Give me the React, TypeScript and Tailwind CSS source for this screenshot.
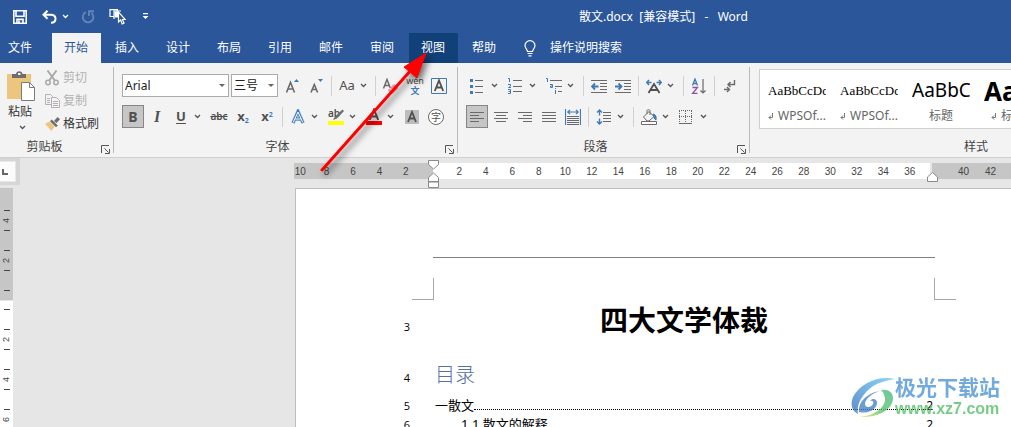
import React from 'react';

const GREY = '#6a6a6a';
const BLUE = '#3f7ab8';

const TABS = ['开始', '插入', '设计', '布局', '引用', '邮件', '审阅', '视图', '帮助'];

const STYLES = [
  { name: 'WPSOf...', sample: 'AaBbCcDd', mark: true, look: "text-[13px] font-['Liberation_Serif',serif]" },
  { name: 'WPSOf...', sample: 'AaBbCcDd', mark: true, look: "text-[13px] font-['Liberation_Serif',serif]" },
  { name: '标题', sample: 'AaBbC', mark: false, look: 'text-[19px]' },
  { name: '标题 1', sample: 'AaBb', mark: true, look: 'text-[26px] font-bold' },
  { name: '标题 2', sample: 'AaBb', mark: true, look: 'text-[19px] font-bold' },
  { name: '标题 3', sample: 'AaBb', mark: true, look: 'text-[19px] font-bold' },
];

const Chevron = ({ color = '#555555' }: { color?: string }) => (
  <svg width="7" height="5" viewBox="0 0 7 5" className="shrink-0" fill="none" stroke={color} strokeWidth="1.3">
    <path d="M1 1l2.5 2.5L6 1" />
  </svg>
);

const Sep = () => <div className="mx-[3px] h-5 w-px shrink-0 bg-[#d0d0d0]" />;

interface IconProps {
  children: React.ReactNode;
  size?: number;
}

const Icon = ({ children, size = 16 }: IconProps) => (
  <svg width={size} height={size} viewBox={`0 0 ${size} ${size}`} className="shrink-0" fill="none" stroke={GREY}>
    {children}
  </svg>
);

interface ToolProps {
  label: string;
  children: React.ReactNode;
  active?: boolean;
}

const Tool = ({ label, children, active }: ToolProps) => (
  <button
    type="button"
    aria-label={label}
    title={label}
    className={`flex h-[23px] shrink-0 items-center justify-center text-[#505050] ${
      active ? 'mr-px w-[22px] border border-[#868686] bg-[#c6c6c6]' : 'w-6 hover:bg-[#dadada]'
    }`}
  >
    {children}
  </button>
);

// Icon button with a menu arrow on its right
const Split = ({ label, children }: ToolProps) => (
  <button
    type="button"
    aria-label={label}
    title={label}
    className="flex h-[23px] w-[38px] shrink-0 items-center gap-[5px] pl-1 text-[#505050] hover:bg-[#dadada]"
  >
    {children}
    <Chevron />
  </button>
);

interface GroupProps {
  label: string;
  children: React.ReactNode;
  className?: string;
  labelClass?: string;
  launcher?: boolean;
}

const Group = ({ label, children, className = '', labelClass = '', launcher = true }: GroupProps) => (
  <section className={`flex flex-col ${className}`} aria-label={label}>
    <div className="min-h-0 flex-1">{children}</div>
    <div className="flex h-5 shrink-0 items-center">
      <span className={`flex-1 text-center text-xs text-[#444444] ${labelClass}`}>{label}</span>
      {launcher && (
        <button type="button" aria-label={`${label}设置`} className="flex w-4 justify-end pt-1 pr-[3px]">
          <svg width="9" height="9" viewBox="0 0 9 9" fill="none" stroke="#555555">
            <path d="M.5 8V.5H8M3.5 3.5l4 4M8.5 4v4.5H4" />
          </svg>
        </button>
      )}
    </div>
  </section>
);

const Divider = () => <div className="my-1 w-px shrink-0 bg-[#b9b9b9]" />;

interface ComboProps {
  label: string;
  options: string[];
  className: string;
}

const Combo = ({ label, options, className }: ComboProps) => (
  <div className={`relative shrink-0 ${className}`}>
    <select
      aria-label={label}
      className="block h-[23px] w-full appearance-none border border-[#ababab] bg-white pl-[2px] text-xs text-[#222222]"
    >
      {options.map((option) => (
        <option key={option}>{option}</option>
      ))}
    </select>
    <svg width="6" height="3" viewBox="0 0 6 3" className="pointer-events-none absolute top-[10px] right-[4px]" fill="#666666">
      <path d="M0 0h6L3 3z" />
    </svg>
  </div>
);

const TitleBar = () => (
  <header className="flex h-[33px] shrink-0 items-center bg-[#2b579a] pl-2 text-white">
    <button type="button" aria-label="保存" className="flex w-6 justify-center">
      <svg width="14" height="14" viewBox="0 0 14 14" fill="none" stroke="white" strokeWidth="1.6">
        <path d="M.8.8h12.4v12.4H.8zM3 1v5.2h8V1M4 13V9.4h6V13M6 10.5V13" />
      </svg>
    </button>
    <button type="button" aria-label="撤消" className="ml-[5px] flex w-6 justify-center">
      <svg width="15" height="14" viewBox="0 0 15 14" fill="none" stroke="white" strokeWidth="2">
        <path d="M5.5.8L1.5 4.8l4 4M2 4.8h6.5c3.3 0 5 1.8 5 4 0 2.5-1.8 4-4.5 4" />
      </svg>
    </button>
    <button type="button" aria-label="撤消列表" className="ml-[1px]">
      <Chevron color="white" />
    </button>
    <button type="button" aria-label="重复" className="ml-[7px] flex w-6 justify-center">
      <svg width="14" height="14" viewBox="0 0 14 14" fill="none" stroke="#6384b6" strokeWidth="1.9">
        <path d="M5 2.2A5.3 5.3 0 1 0 10.5 3M8 6V1.2h5" />
      </svg>
    </button>
    <button type="button" aria-label="选择对象" className="ml-[5px] flex w-6 justify-center">
      <svg width="17" height="17" viewBox="0 0 17 17" fill="none" stroke="white" strokeWidth="1.2">
        <path d="M5 8.5H1V1.6h7.5V3M5 11V3h7" />
        <path d="M5.5 3.5H9v6H5.5z" fill="white" stroke="none" />
        <path d="M9.5 4v10l2.2-2 1.5 4 1.8-.8-1.5-3.7h2.8z" fill="#2b579a" />
      </svg>
    </button>
    <button type="button" aria-label="自定义快速访问工具栏" className="ml-3 flex w-2 justify-center">
      <svg width="7" height="7" viewBox="0 0 7 7" fill="white">
        <path d="M1 0h5v1.2H1zM.5 3h6l-3 3z" />
      </svg>
    </button>
    <h1 className="ml-auto w-[432px] text-xs whitespace-pre">散文.docx  [兼容模式]   -   Word</h1>
  </header>
);

const TabBar = () => (
  <nav className="flex h-[30px] shrink-0 items-stretch bg-[#2b579a] text-xs text-white">
    <button type="button" className="w-[52px] pr-3">文件</button>
    <div className="flex gap-[2px]">
      {TABS.map((tab) => (
        <button
          key={tab}
          type="button"
          className={`w-[49px] pr-px ${tab === '开始' ? 'bg-[#f3f3f3] text-[#2b579a]' : ''} ${tab === '视图' ? 'bg-[#124078]' : ''}`}
        >
          {tab}
        </button>
      ))}
    </div>
    <button type="button" className="ml-[15px] flex items-center gap-[14px]">
      <svg width="12" height="17" viewBox="0 0 12 17" fill="none" stroke="white" strokeWidth="1.2">
        <path d="M3.5 11.5C3.5 9.5 1 8.5 1 5.6a5 5 0 0 1 10 0c0 2.9-2.5 3.9-2.5 5.9zM3.5 13.5h5M4.5 15.8h3" />
      </svg>
      操作说明搜索
    </button>
  </nav>
);

const ClipboardGroup = () => (
  <Group label="剪贴板" className="w-[113px] shrink-0" labelClass="pr-2">
    <div className="flex">
      <button type="button" className="flex w-10 flex-col items-center pt-2 text-xs text-[#333333]">
        <svg width="29" height="30" viewBox="0 0 29 30" className="ml-[3px]">
          <path d="M0 3h24v25H0z" fill="#edc67d" />
          <path d="M5 3h4a3.3 3.3 0 0 1 6.5 0H19v4H5z" fill="#6d6d6d" />
          <path d="M11 2h2.5v2H11z" fill="#f3f3f3" />
          <path d="M14.5 11.5h8l5 5v13h-13z" fill="white" stroke="#7a7a7a" />
          <path d="M22.5 11.5v5h5" fill="none" stroke="#7a7a7a" />
        </svg>
        <span className="leading-[22px]">粘贴</span>
        <span className="flex h-2 items-center pl-1"><Chevron /></span>
      </button>
      <div className="flex flex-col pt-[3px] pl-[5px] text-xs">
        <button type="button" disabled className="flex h-[23px] items-center gap-[3px] text-[#b1b1b1]">
          <svg width="15" height="16" viewBox="0 0 15 16" fill="none" stroke="#a8a8a8" strokeWidth="1.5">
            <path d="M2.5.5l7.3 10M11.5.5l-7.3 10" strokeWidth="1.9" />
            <circle cx="3" cy="12.5" r="2.2" />
            <circle cx="11" cy="12.5" r="2.2" />
          </svg>
          剪切
        </button>
        <button type="button" disabled className="flex h-[23px] items-center gap-[3px] text-[#b1b1b1]">
          <svg width="15" height="14" viewBox="0 0 15 14" fill="#f3f3f3" stroke="#b5aebb">
            <path d="M.5.5h5l2 2v8h-7zM2 4.5h3M2 6.5h3M2 8.5h3" />
            <path d="M6.5 3.5h5l3 3v7h-8zM8 7.5h5M8 9.5h5M8 11.5h5" />
          </svg>
          复制
        </button>
        <button type="button" className="flex h-[23px] items-center gap-[3px] text-[#333333]">
          <svg width="15" height="14" viewBox="0 0 15 14">
            <path d="M0 7l4.5-2.5 5 5L6.5 14z" fill="#edc67d" />
            <path d="M5 4.2l1.8-1.7 6 6-1.8 1.7z" fill="#6d6d6d" />
            <path d="M9 4l3.5-4L15 2.3 11.5 6z" fill="#6d6d6d" />
          </svg>
          格式刷
        </button>
      </div>
    </div>
  </Group>
);

const FontGroup = () => (
  <Group label="字体" className="w-[343px] shrink-0">
    <div className="flex flex-col gap-2 pt-[11px] pl-2">
      <div className="flex items-center">
        <div className="mr-[2px] flex gap-[2px]">
          <Combo label="字体" options={['Arial', '宋体', '黑体']} className="w-[107px]" />
          <Combo label="字号" options={['三号', '四号', '五号']} className="w-[47px]" />
        </div>
        <Tool label="增大字号">
          <Icon>
            <path d="M2.5 14.5l4-10 4 10M4 11h5.2" strokeWidth="1.6" />
            <path d="M10 4l2.5-3L15 4z" fill={BLUE} stroke="none" />
          </Icon>
        </Tool>
        <Tool label="减小字号">
          <Icon>
            <path d="M3 14.5l3.3-8 3.3 8M4.2 11.5h4.2" strokeWidth="1.6" />
            <path d="M10 1l2.5 3L15 1z" fill={BLUE} stroke="none" />
          </Icon>
        </Tool>
        <Sep />
        <Split label="更改大小写">
          <span className="w-4 text-[13px] leading-none">Aa</span>
        </Split>
        <div className="-ml-px flex items-center">
          <Sep />
          <Tool label="清除所有格式">
            <Icon>
              <path d="M.5 10.5l3.5-9 3.5 9M1.8 7.5h4.5" strokeWidth="1.5" />
              <path d="M5 12l6-6 4.5 4-5.5 5.5H7z" fill="#e8919c" stroke="none" />
              <path d="M6.5 10l4 4" stroke="#f3f3f3" />
            </Icon>
          </Tool>
          <Tool label="拼音指南">
            <span className="flex flex-col items-center leading-[10px]">
              <span className="text-[9px]">wén</span>
              <span className="text-[9px] font-bold text-[#3f7ab8]">文</span>
            </span>
          </Tool>
          <Tool label="字符边框">
            <Icon>
              <path d="M.5.5h15v15H.5z" stroke={BLUE} />
              <path d="M3.8 13L8 2.5 12.2 13M5.2 9.5h5.6" strokeWidth="1.8" stroke="#505050" />
            </Icon>
          </Tool>
        </div>
      </div>
      <div className="flex items-center">
        <Tool label="加粗" active><b className="text-sm">B</b></Tool>
        <Tool label="倾斜"><i className="font-['Liberation_Serif',serif] text-base font-bold">I</i></Tool>
        <Split label="下划线"><span className="w-4 text-center text-[13px] font-bold underline underline-offset-2">U</span></Split>
        <Tool label="删除线"><span className="text-[10px] font-semibold line-through">abc</span></Tool>
        <Tool label="下标">
          <span className="text-[13px] font-bold">x<sub className="text-[7px] text-[#3f7ab8]">2</sub></span>
        </Tool>
        <Tool label="上标">
          <span className="text-[13px] font-bold">x<sup className="text-[7px] text-[#3f7ab8]">2</sup></span>
        </Tool>
        <Sep />
        <Split label="文本效果">
          <Icon>
            <path d="M3 14L8 2.5 13 14M4.8 10h6.4" stroke="#b5d0ec" strokeWidth="4" />
            <path d="M3 14L8 2.5 13 14M4.8 10h6.4" stroke={BLUE} strokeWidth="2.8" />
            <path d="M3.2 13.5L8 3l4.8 10.5M5.2 10h5.6" stroke="white" strokeWidth="1" />
          </Icon>
        </Split>
        <Split label="突出显示颜色">
          <svg width="16" height="17" viewBox="0 0 16 17" className="shrink-0 overflow-visible">
            <text x="0" y="9" fontSize="10" fontWeight="600" fill="#505050">ab</text>
            <path d="M14.5 1.5L16 3l-7 7.5L5 12l2-3.5z" fill="#6d6d6d" />
            <path d="M0 13h16v4H0z" fill="#ffff00" />
          </svg>
        </Split>
        <Split label="字体颜色">
          <svg width="16" height="17" viewBox="0 0 16 17" className="shrink-0">
            <path d="M3.8 12L8 1.5 12.2 12M5.2 8.5h5.6" stroke="#505050" strokeWidth="2" fill="none" />
            <path d="M0 13h16v4H0z" fill="#ff0000" />
          </svg>
        </Split>
        <Tool label="字符底纹">
          <Icon size={14}>
            <path d="M0 0h14v14H0z" fill="#bcbcbc" stroke="none" />
            <path d="M3 12L7 2l4 10M4.5 8.5h5" strokeWidth="1.8" stroke="#505050" />
          </Icon>
        </Tool>
        <Tool label="带圈字符">
          <span className="flex size-4 items-center justify-center rounded-full border border-[#6a6a6a] bg-white text-[10px] leading-none">字</span>
        </Tool>
      </div>
    </div>
  </Group>
);

const ParagraphGroup = () => (
  <Group label="段落" className="w-[291px] shrink-0">
    <div className="flex flex-col gap-2 pt-[11px] pl-2">
      <div className="flex items-center">
        <Split label="项目符号">
          <Icon>
            <path d="M5 2.5h8M5 8.5h8M5 14.5h8" />
            <path d="M0 1h3v3H0zM0 7h3v3H0zM0 13h3v3H0z" fill={BLUE} stroke="none" />
          </Icon>
        </Split>
        <Split label="编号">
          <Icon>
            <path d="M5 2.5h9M5 8.5h9M5 13.5h9" />
            <path d="M0 .5h1.5V4M0 6.5h2.5V8L.5 9.500H3M0 11.5h2.5v4H0M.5 13.5h2" stroke={BLUE} />
          </Icon>
        </Split>
        <Split label="多级列表">
          <Icon>
            <path d="M4 2.5h12M9 8.5h7M12 13.5h4" />
            <path d="M0 .5h1.5V4M4 6.5h2.5v3h-2V8H6M9.5 12v4M9.5 10v1" stroke={BLUE} />
          </Icon>
        </Split>
        <Sep />
        <Tool label="减少缩进量">
          <Icon>
            <path d="M0 2.5h16M9 5.5h7M9 8.5h7M9 11.5h7M0 14.5h16" />
            <path d="M7.5 8.5h-6M4 5.5l-3 3 3 3" stroke={BLUE} strokeWidth="1.8" />
          </Icon>
        </Tool>
        <Tool label="增加缩进量">
          <Icon>
            <path d="M0 2.5h16M9 5.5h7M9 8.5h7M9 11.5h7M0 14.5h16" />
            <path d="M0 8.5h6M3.5 5.5l3 3-3 3" stroke={BLUE} strokeWidth="1.8" />
          </Icon>
        </Tool>
        <Sep />
        <Split label="中文版式">
          <Icon>
            <path d="M2.5 15L8 6l5.5 9M4.5 12h7" strokeWidth="1.8" stroke="#505050" />
            <path d="M5.5 4.5h-5M3 2L.8 4.5 3 7M10.5 4.5h5M13 2l2.2 2.5L13 7" stroke={BLUE} strokeWidth="1.5" />
          </Icon>
        </Split>
        <Sep />
        <Tool label="排序">
          <Icon>
            <path d="M1.5 7.5L4 1l2.5 6.5M2.3 5.5h3.4" stroke={BLUE} strokeWidth="1.3" />
            <path d="M1.5 9.5h5l-5 6h5" stroke="#8e4fae" strokeWidth="1.3" />
            <path d="M12 1v14M9.5 12.5L12 15l2.5-2.5" strokeWidth="1.2" />
          </Icon>
        </Tool>
        <Sep />
        <Tool label="显示编辑标记">
          <Icon>
            <path d="M12.5 2v4.5h-6M8.5 4L6 6.5 8.5 9M2 11.5h5M5 9l2.5 2.5L5 14" strokeWidth="1.4" />
          </Icon>
        </Tool>
      </div>
      <div className="flex items-center">
        <Tool label="左对齐" active>
          <Icon><path d="M1 3.5h14M1 6.5h9M1 9.5h14M1 12.5h9" /></Icon>
        </Tool>
        <Tool label="居中">
          <Icon><path d="M1 3.5h14M3 6.5h10M1 9.5h14M3 12.5h10" /></Icon>
        </Tool>
        <Tool label="右对齐">
          <Icon><path d="M1 3.5h14M6 6.5h9M1 9.5h14M6 12.5h9" /></Icon>
        </Tool>
        <Tool label="两端对齐">
          <Icon><path d="M1 3.5h14M1 6.5h14M1 9.5h14M1 12.5h14" /></Icon>
        </Tool>
        <Tool label="分散对齐">
          <Icon>
            <path d="M2 7.5h12M2 9.5h12M2 11.5h12M2 13.5h12M2 15.5h12" />
            <path d="M.5 0v16M15.5 0v16M3 3h10M5 .8L2.8 3 5 5.2M11 .8L13.2 3 11 5.2" stroke={BLUE} strokeWidth="1.2" />
          </Icon>
        </Tool>
        <Sep />
        <Split label="行和段落间距">
          <Icon>
            <path d="M7 3.5h8M7 6.5h8M7 9.5h8M7 12.5h8" />
            <path d="M3.5 1v5.5M1 3.5L3.5 1 6 3.5M3.5 9.5V15M1 12.5L3.5 15 6 12.5" stroke={BLUE} strokeWidth="1.4" />
          </Icon>
        </Split>
        <Sep />
        <Split label="底纹">
          <Icon>
            <path d="M2.5 8L8 2.5l5 5L8 12H6zM6 5V1.5C6 .5 9 .5 9 1.5V6" />
            <path d="M12 5c3 .5 3.5 3 3 6-2-1-2-3-3-6z" fill={BLUE} stroke={BLUE} />
            <path d="M.5 12.5h15v3H.5z" fill="white" />
          </Icon>
        </Split>
        <Split label="边框">
          <Icon>
            <path d="M.5 2v12M6.5 2v12M12.5 2v12M0 1.5h13M0 7.5h13" strokeDasharray="1 1" />
            <path d="M0 14.5h13" />
          </Icon>
        </Split>
      </div>
    </div>
  </Group>
);

const StylesGroup = () => (
  <Group label="样式" className="min-w-[452px] flex-1" launcher={false}>
    <div className="mt-[6px] ml-[9px] flex h-[60px] overflow-hidden border border-[#cfcfcf] bg-white pl-[2px]">
      {STYLES.map((style, i) => (
        <button key={i} type="button" className="w-[72px] shrink-0 overflow-hidden pt-1 pr-2 pl-[6px] text-xs text-[#666666]">
          <span className={`flex h-[30px] items-center overflow-hidden whitespace-nowrap text-black ${style.look}`}>
            {style.sample}
          </span>
          <span className="flex h-5 items-center justify-center gap-1 whitespace-nowrap">
            {style.mark && (
              <svg width="6" height="7" viewBox="0 0 6 7" fill="none" stroke="#777777">
                <path d="M4.5 0v4.5H1M3 2.5l-2 2 2 2" />
              </svg>
            )}
            {style.name}
          </span>
        </button>
      ))}
    </div>
  </Group>
);

const VerticalRuler = () => {
  const above = ['|', '4', '|', '', '|', '2', '|', '', '|'];
  const below = ['|', '', '|', '2', '|', '', '|', '4', '|', '', '|', '6', '|'];

  const slot = (mark: string, i: number) => (
    <div key={i} className="flex h-[10px] shrink-0 items-center justify-center">
      {mark === '|' ? (
        <div className="h-px w-[6px] bg-[#444444]" />
      ) : (
        <span className="-rotate-90 text-[9px] leading-none">{mark}</span>
      )}
    </div>
  );

  return (
    <div className="mt-[3px] flex w-[13px] flex-1 flex-col overflow-hidden bg-white font-['Liberation_Sans',sans-serif] text-[#444444]">
      <div className="flex h-[113px] shrink-0 flex-col justify-end border-b border-[#e6e6e6] bg-[#c6c6c6] pb-[5px]">
        {above.map(slot)}
      </div>
      <div className="pt-[3px]">{below.map(slot)}</div>
    </div>
  );
};

const HorizontalRuler = () => (
  <div className="relative mt-[5px] -ml-px flex h-4 font-['Liberation_Sans',sans-serif] text-[10px] leading-[17px] text-[#444444]">
    <div className="flex w-[139px] shrink-0 justify-end bg-[#c6c6c6] pr-[14px]">
      <div className="flex w-[132px] shrink-0 text-center">
        {[10, 8, 6, 4, 2].map((n) => (
          <span key={n} className="flex-1">{n}</span>
        ))}
      </div>
    </div>
    <div className="flex w-[497px] shrink-0 bg-white pl-[13px]">
      <div className="flex w-[477px] text-center">
        {Array.from({ length: 18 }, (_, i) => (
          <span key={i} className="flex-1">{(i + 1) * 2}</span>
        ))}
      </div>
    </div>
    <div className="ml-[2px] flex flex-1 bg-[#c6c6c6] pl-[18px] text-center">
      <span className="w-[27px]">40</span>
      <span className="w-[27px]">42</span>
    </div>
    {/* Indent markers */}
    <svg width="11" height="28" viewBox="0 0 11 28" className="absolute -top-[3px] left-[134px]" fill="white" stroke="#8a8a8a">
      <path d="M.5.5h10v4L5.5 9l-5-4.5zM.5 22v-4.5l5-4.5 5 4.5V22zM.5 21.5h10v6H.5z" />
    </svg>
    <svg width="11" height="10" viewBox="0 0 11 10" className="absolute top-[9px] left-[633px]" fill="white" stroke="#8a8a8a">
      <path d="M.5 9.5V5l5-4.5 5 4.5v4.5z" />
    </svg>
  </div>
);

interface LineProps {
  n: number;
  children: React.ReactNode;
  className?: string;
}

const Line = ({ n, children, className = '' }: LineProps) => (
  <div className={`flex items-baseline ${className}`}>
    <span className="w-[114px] shrink-0 text-right font-['Open_Sans',sans-serif] text-[11px] leading-4">{n}</span>
    <div className="ml-[25px] flex w-[498px] shrink-0 items-baseline">{children}</div>
  </div>
);

const Leader = () => <span className="flex-1 border-b border-dotted border-black" />;

const Page = () => (
  <article className="mt-[9px] flex-1 overflow-hidden border-t border-l border-[#bdbdbd] bg-white pt-[68px] text-black">
    <div className="ml-[137px] h-px w-[502px] bg-[#808080]" />
    <div className="mt-5 ml-[116px] flex w-[544px] justify-between">
      <div className="size-[22px] border-r border-b border-[#a8a8a8]" />
      <div className="size-[22px] border-b border-l border-[#a8a8a8]" />
    </div>
    <Line n={3} className="h-[54px]">
      <h2 className="flex-1 text-center text-[28px] leading-[41px] font-bold">四大文学体裁</h2>
    </Line>
    <Line n={4} className="h-[42px]">
      <h3 className="text-xl leading-[42px] font-light text-[#5470a6]">目录</h3>
    </Line>
    <Line n={5} className="h-[19px] text-[13px] leading-[19px]">
      一散文<Leader /><span className="text-xs leading-4">2</span>
    </Line>
    <Line n={6} className="h-[19px] text-[13px] leading-[19px]">
      <span className="pl-[26px]">1.1 散文的解释</span><Leader /><span className="text-xs leading-4">2</span>
    </Line>
  </article>
);

const Watermark = () => (
  <div className="pointer-events-none absolute right-[11px] bottom-[8px] flex items-center opacity-80">
    <svg width="44" height="42" viewBox="0 0 44 42">
      <defs>
        <linearGradient id="wave" x1="0" y1="1" x2="1" y2="0">
          <stop offset="0" stopColor="#3a72bd" />
          <stop offset="1" stopColor="#6ecdf5" />
        </linearGradient>
        <linearGradient id="leaf" x1="0" y1="1" x2="1" y2="0">
          <stop offset="0" stopColor="#e9e66a" />
          <stop offset=".45" stopColor="#5cc46c" />
          <stop offset="1" stopColor="#4dbb86" />
        </linearGradient>
      </defs>
      <path d="M44 2C28-2 9 6 2 20c-3 8-1 14 5 17C5 28 11 17 22 9 29 5 37 3 44 2z" fill="url(#wave)" />
      <path d="M8 35c-1-10 8-19 21-21-8 2-15 8-15 13 0 4 6 4 8 0 1-3-1-4-3-3 3-4 8-1 7 3-2 7-11 10-18 8z" fill="#4b83c8" />
      <path d="M30 13c7-1 12 2 12 8 0 12-16 20-34 19 14-1 25-8 26-17 0-4-1-7-4-10z" fill="url(#leaf)" />
    </svg>
    <div className="flex flex-col font-bold whitespace-nowrap">
      <span className="text-[21px] leading-[23px] text-[#4f96d6]">极光下载站</span>
      <span className="font-['Liberation_Sans',sans-serif] text-base leading-[20px] text-[#55c069]">www.xz7.com</span>
    </div>
  </div>
);

// Red pointer from the ruler up to the 视图 tab
const Arrow = () => (
  <svg width="130" height="140" viewBox="0 0 130 140" className="pointer-events-none absolute top-[46px] left-[310px] drop-shadow-[3px_4px_3px_rgba(0,0,0,0.55)]">
    <path d="M12 124L102 23" stroke="#ff0000" strokeWidth="3" strokeLinecap="round" />
    <path d="M116 7L94 21l13 11z" fill="#ff0000" stroke="#ff0000" />
  </svg>
);

const App: React.FC = () => {
  return (
    <div className="relative flex h-screen flex-col overflow-hidden bg-[#e6e6e6] font-['Noto_Sans','Noto_Sans_CJK_SC',sans-serif]">
      <TitleBar />
      <TabBar />
      <div className="flex h-[95px] shrink-0 overflow-hidden border-b border-[#cfcfcf] bg-[#f3f3f3]">
        <ClipboardGroup />
        <Divider />
        <FontGroup />
        <Divider />
        <ParagraphGroup />
        <Divider />
        <StylesGroup />
      </div>
      <main className="flex min-h-0 flex-1">
        <div className="flex w-[295px] shrink-0 flex-col">
          <div className="flex h-[27px] w-5 shrink-0 items-center bg-[#d6d6d6]">
            <button type="button" aria-label="制表符" className="flex h-[21px] w-4 items-center border-y border-r border-[#e8e8e8] bg-[#fbfbfb] pl-[2px]">
              <svg width="6" height="6" viewBox="0 0 6 6" fill="#666666">
                <path d="M0 0h2v4h4v2H0z" />
              </svg>
            </button>
          </div>
          <VerticalRuler />
        </div>
        <div className="flex min-w-0 flex-1 flex-col">
          <HorizontalRuler />
          <Page />
        </div>
      </main>
      <Arrow />
      <Watermark />
    </div>
  );
};

export default App;
